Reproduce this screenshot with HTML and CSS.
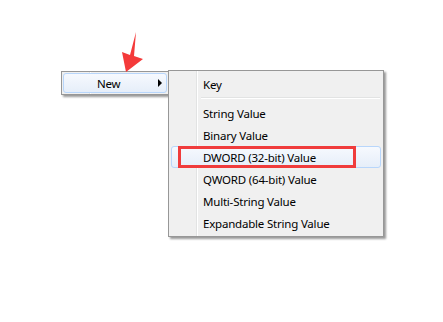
FILE: index.html
```html
<!DOCTYPE html>
<html lang="en">
<head>
    <meta charset="UTF-8">
    <title>New context menu</title>
    <link rel="stylesheet" href="styles.css">
</head>
<body>

    <div class="stage">
        <svg class="pointer" width="24" height="44" viewBox="0 0 24 44">
            <polygon points="16,0 14,24 23,27 6,40 2,20 10,23" fill="#f43a3a"/>
        </svg>

        <div class="menu menu-main">
            <div class="item active">
                <span class="label">New</span>
                <span class="caret"></span>
            </div>
        </div>

        <div class="menu menu-sub">
            <div class="item"><span class="label">Key</span></div>
            <div class="sep"></div>
            <div class="item"><span class="label">String Value</span></div>
            <div class="item"><span class="label">Binary Value</span></div>
            <div class="item active">
                <span class="label">DWORD (32-bit) Value</span>
                <span class="mark"></span>
            </div>
            <div class="item"><span class="label">QWORD (64-bit) Value</span></div>
            <div class="item"><span class="label">Multi-String Value</span></div>
            <div class="item"><span class="label">Expandable String Value</span></div>
        </div>
    </div>

</body>
</html>
```

FILE: styles.css
```css
* {
    margin: 0;
    padding: 0;
    box-sizing: border-box;
}

body {
    background: #fff;
    font-family: 'Noto Sans', 'Open Sans', sans-serif;
    font-size: 11.5px;
    letter-spacing: -0.2px;
    color: #000;
}

.stage {
    position: relative;
    width: 443px;
    height: 322px;
    overflow: hidden;
}

.pointer {
    position: absolute;
    left: 120px;
    top: 32px;
    z-index: 3;
}

.menu {
    position: absolute;
    background: linear-gradient(to right, #f0f0f0 27px, #e2e3e3 27px, #e2e3e3 28px, #fff 28px, #fff 29px, #f0f0f0 29px);
    border: 1px solid #979797;
    box-shadow: 2px 2px 2px rgba(0, 0, 0, 0.4);
    display: flex;
    flex-direction: column;
}

.menu-main {
    left: 61px;
    top: 71px;
    width: 108px;
    padding: 1px;
}

.menu-main .item {
    height: 20px;
    padding-left: 33px;
}

.menu-sub {
    left: 168px;
    top: 70px;
    width: 216px;
    padding: 2px;
    z-index: 2;
}

.item {
    position: relative;
    display: flex;
    align-items: center;
    height: 22px;
    padding-left: 31px;
    border: 1px solid transparent;
    border-radius: 3px;
}

.item.active {
    border-color: #b8d6fb;
    background: linear-gradient(#f6f9fe, #e6eef9);
}

.label {
    flex: 1;
    white-space: nowrap;
}

.caret {
    width: 0;
    height: 0;
    border-top: 4px solid transparent;
    border-bottom: 4px solid transparent;
    border-left: 4px solid #000;
    margin-right: 4px;
}

.sep {
    margin: 2px 1px 3px 30px;
    border-top: 1px solid #e2e3e3;
    border-bottom: 1px solid #fff;
}

.mark {
    position: absolute;
    left: 6px;
    top: -1px;
    width: 178px;
    height: 22px;
    border: 3px solid #f03c3c;
}
```
